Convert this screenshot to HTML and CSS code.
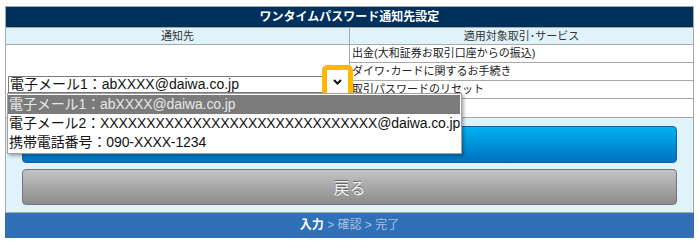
FILE: index.html
```html
<!DOCTYPE html>
<html lang="ja">
<head>
<meta charset="utf-8">
<title>ワンタイムパスワード通知先設定</title>
<link rel="stylesheet" href="styles.css">
</head>
<body>
<div class="page">
  <table class="settings">
    <thead>
      <tr><th colspan="2" class="title">ワンタイムパスワード通知先設定</th></tr>
      <tr><th class="sub col-dest">通知先</th><th class="sub">適用対象取引･サービス</th></tr>
    </thead>
    <tbody>
      <tr>
        <td rowspan="4" class="dest">
          <div class="select-wrap">
            <div class="select">電子メール1：abXXXX@daiwa.co.jp</div>
            <div class="focus-ring">
              <svg width="9" height="6" viewBox="0 0 9 6"><path d="M1 1 L4.5 4.5 L8 1" fill="none" stroke="#111" stroke-width="2"/></svg>
            </div>
            <ul class="dropdown">
              <li class="opt selected">電子メール1：abXXXX@daiwa.co.jp</li>
              <li class="opt">電子メール2：XXXXXXXXXXXXXXXXXXXXXXXXXXXXXX@daiwa.co.jp</li>
              <li class="opt">携帯電話番号：090-XXXX-1234</li>
            </ul>
          </div>
        </td>
        <td class="svc">出金(大和証券お取引口座からの振込)</td>
      </tr>
      <tr><td class="svc">ダイワ･カードに関するお手続き</td></tr>
      <tr><td class="svc">取引パスワードのリセット</td></tr>
      <tr><td class="svc last"></td></tr>
    </tbody>
  </table>
  <div class="actions">
    <button class="btn primary">確認</button>
    <button class="btn back">戻る</button>
  </div>
  <div class="steps"><b>入力</b> &gt; 確認 &gt; 完了</div>
</div>
</body>
</html>
```

FILE: styles.css
```css
html, body {
  margin: 0;
  padding: 0;
  background: #fff;
}
body {
  font-family: "Liberation Sans", "Noto Sans CJK JP", sans-serif;
  color: #222;
}
.page {
  margin: 6px 6px 0 5px;
  width: 689px;
}
.settings {
  width: 689px;
  border-collapse: collapse;
  table-layout: fixed;
}
.settings th, .settings td {
  border: 1px solid #a8a8a8;
  padding: 0;
}
.title {
  background: #00305c;
  color: #fff;
  font-size: 12px;
  font-weight: bold;
  height: 20px;
  line-height: 20px;
  border-color: #00305c;
}
.sub {
  background: #e0f3fa;
  color: #333;
  font-size: 11px;
  font-weight: normal;
  height: 16px;
  line-height: 16px;
}
.col-dest {
  width: 344px;
}
.dest {
  vertical-align: top;
  background: #fff;
  padding: 31px 3px 0 2px !important;
}
.svc {
  font-size: 11px;
  height: 17px;
  line-height: 17px;
  padding: 0 2px !important;
  white-space: nowrap;
  background: #fff;
}
.svc.last {
  height: 18px;
}
.select-wrap {
  position: relative;
  width: 338px;
}
.select {
  height: 15px;
  border: 1px solid #7a7a7a;
  background: #fff;
  font-size: 14px;
  line-height: 15px;
  padding-left: 1px;
  white-space: nowrap;
  color: #111;
}
.focus-ring {
  position: absolute;
  left: 314px;
  top: -11px;
  width: 21px;
  height: 23px;
  border: 5px solid #ffb700;
  border-radius: 5px;
  background: #fff;
  display: flex;
  align-items: center;
  justify-content: center;
  z-index: 3;
}
.dropdown {
  position: absolute;
  left: -1px;
  top: 17px;
  margin: 0;
  padding: 1px 1px 1px 0;
  list-style: none;
  background: #fff;
  border: 1px solid #a0a0a0;
  box-shadow: 2px 2px 3px rgba(0, 0, 0, 0.3);
  width: max-content;
  z-index: 4;
}
.opt {
  font-size: 14px;
  height: 19px;
  line-height: 19px;
  padding-left: 1px;
  white-space: nowrap;
  color: #111;
  letter-spacing: -0.1px;
}
.opt.selected {
  background: #7b7b7b;
  color: #e8e8e8;
}
.actions {
  background: #e1f3fa;
  border: 1px solid #a8a8a8;
  border-top: 0;
  padding: 8px 16px 7px;
  display: flex;
  flex-direction: column;
  gap: 6px;
}
.btn {
  display: block;
  width: 100%;
  border-radius: 4px;
  font-family: "Liberation Sans", "Noto Sans CJK JP", sans-serif;
  font-size: 15px;
  color: #fff;
  padding: 0;
  margin: 0;
}
.primary {
  height: 37px;
  background: linear-gradient(#00b2f0, #0070c2);
  border: 1px solid #0a64a8;
}
.back {
  height: 36px;
  background: linear-gradient(#c4c4c4, #8b8b8b);
  border: 1px solid #767676;
  color: #f4f4f4;
  font-size: 16px;
  text-shadow: 0 -1px 0 #666;
}
.steps {
  height: 25px;
  line-height: 25px;
  background: #2f70b6;
  text-align: center;
  font-size: 12px;
  color: #a9c2e2;
}
.steps b {
  color: #fff;
}
```
